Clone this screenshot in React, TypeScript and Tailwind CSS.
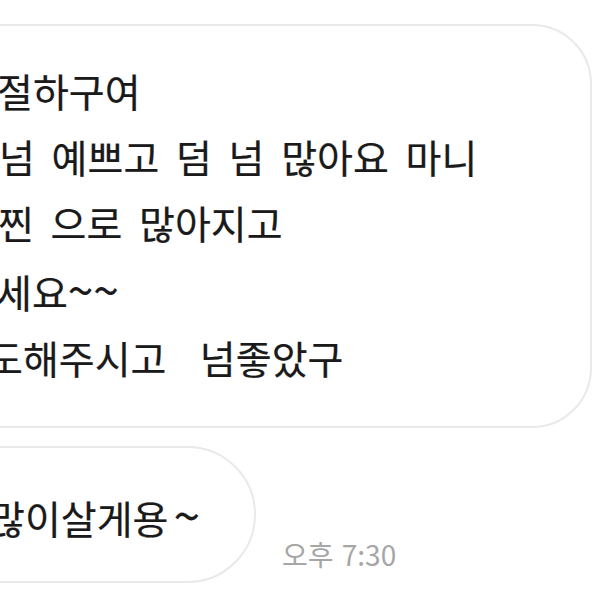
import React from "react";

const lines = [
  { text: "절하구여", shift: "ml-[-5px]" },
  { text: "넘 예쁘고 덤 넘 많아요 마니", shift: "ml-[-3px]" },
  { text: "찐 으로 많아지고", shift: "ml-[-4px]" },
  { text: "세요", tail: "~~", shift: "ml-[-6px]" },
  { text: "도해주시고  넘좋았구", shift: "ml-[-15px]" },
];

export default function App() {
  return (
    <div className="w-[608px] h-[608px] overflow-hidden bg-white font-['Noto_Sans_CJK_KR',sans-serif] text-[#1a1a1a]">
      <div className="flex flex-col pt-[24px]">
        {/* long message */}
        <div className="ml-[-60px] w-[652px] rounded-r-[60px] border-2 border-[#e9e9e9] bg-white pt-[31px] pb-[36px] pl-[60px]">
          {lines.map((l) => (
            <p
              key={l.text}
              className={`${l.shift} whitespace-pre text-[39px] leading-[66px] [word-spacing:8px] [-webkit-text-stroke:0.2px]`}
            >
              {l.text}
              {l.tail && <span className="text-[46px]">{l.tail}</span>}
            </p>
          ))}
        </div>

        {/* short message + time */}
        <div className="mt-[18px] flex items-end">
          <div className="ml-[-60px] flex h-[137px] w-[316px] items-center rounded-r-full border-2 border-[#e9e9e9] bg-white pl-[60px]">
            <p className="ml-[-13px] whitespace-pre text-[39px] leading-[66px] [-webkit-text-stroke:0.2px]">
              많이살게용<span className="ml-[5px] text-[48px]">~</span>
            </p>
          </div>
          <span className="mb-[11px] ml-[26px] text-[28px] leading-[36px] [word-spacing:2px] text-[#a6a6a6]">오후 7:30</span>
        </div>
      </div>
    </div>
  );
}
